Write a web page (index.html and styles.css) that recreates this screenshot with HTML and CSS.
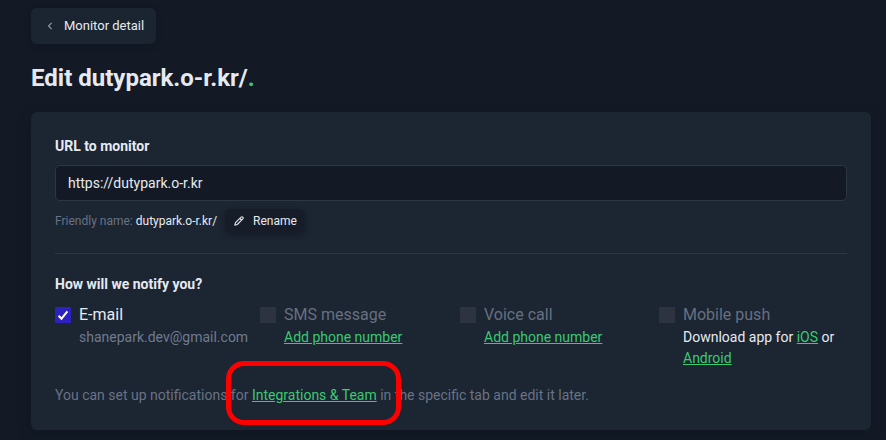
FILE: index.html
```html
<!DOCTYPE html>
<html lang="en">
<head>
<meta charset="utf-8">
<title>Edit monitor</title>
<link rel="stylesheet" href="styles.css">
</head>
<body>
<main class="page">
  <a class="back">
    <svg class="back-icon" viewBox="0 0 6 8"><path d="M4.700 .8L1.500 4l3.200 3.200"/></svg>
    <span>Monitor detail</span>
  </a>
  <h1 class="title">Edit dutypark.o-r.kr/<span class="dot">.</span></h1>
  <section class="card">
    <h2 class="label">URL to monitor</h2>
    <div class="field">https://dutypark.o-r.kr</div>
    <div class="friendly">
      <span class="friendly-key">Friendly name:</span>
      <span class="friendly-value">dutypark.o-r.kr/</span>
      <button class="rename">
        <svg class="pencil" viewBox="0 0 10 10"><path d="M.8 9.200l.7-2.500 5.600-5.500a1.100 1.100 0 0 1 1.700 0 1.100 1.100 0 0 1 0 1.700L3.300 8.500zM6 2.500l1.500 1.500"/></svg>
        <span>Rename</span>
      </button>
    </div>
    <hr class="divider">
    <h2 class="label">How will we notify you?</h2>
    <div class="options">
      <div class="option active">
        <span class="check"><svg viewBox="0 0 16 16"><path d="M3.600 8.700l2.900 3L12.400 4.300"/></svg></span>
        <div><div class="name">E-mail</div><div class="sub muted">shanepark.dev@gmail.com</div></div>
      </div>
      <div class="option">
        <span class="check"></span>
        <div><div class="name">SMS message</div><div class="sub"><a class="link">Add phone number</a></div></div>
      </div>
      <div class="option">
        <span class="check"></span>
        <div><div class="name">Voice call</div><div class="sub"><a class="link">Add phone number</a></div></div>
      </div>
      <div class="option">
        <span class="check"></span>
        <div><div class="name">Mobile push</div><div class="sub">Download app for <a class="link">iOS</a> or <a class="link">Android</a></div></div>
      </div>
    </div>
    <p class="note">You can set up notifications for <span class="target"><a class="link">Integrations &amp; Team</a><span class="ring"></span></span> in the specific tab and edit it later.</p>
  </section>
</main>
</body>
</html>
```

FILE: styles.css
```css
* { box-sizing: border-box; }
body {
  margin: 0;
  height: 440px;
  overflow: hidden;
  background: #131a26;
  color: #e6eaf0;
  font: 14px/21px Roboto, sans-serif;
}
.page { padding: 8px 15px 0 31px; }
.back {
  display: flex;
  align-items: center;
  width: 125px;
  height: 36px;
  padding: 0 0 1px 16px;
  gap: 11px;
  border-radius: 6px;
  background: #1b2431;
  box-shadow: 0 2px 6px rgba(8, 12, 20, .25);
  font-size: 13px;
  white-space: nowrap;
}
.back-icon { width: 6px; height: 8px; margin-top: 1px; fill: none; stroke: #8d97a6; stroke-width: 1.2; }
.title {
  margin: 18px 0 0;
  font-size: 24px;
  line-height: 32px;
  font-weight: 700;
}
.dot { color: #3bc971; }
.card {
  height: 318px;
  margin-top: 18px;
  padding: 24px;
  border-radius: 6px;
  background: #1c2532;
  box-shadow: 0 4px 14px rgba(8, 16, 24, .3);
}
.label { margin: 0; font-size: 14px; line-height: 21px; font-weight: 700; }
.field {
  height: 36px;
  margin-top: 8px;
  padding: 0 12px;
  border: 1px solid #2d3643;
  border-radius: 5px;
  background: #131a26;
  line-height: 34px;
}
.friendly {
  display: flex;
  align-items: center;
  height: 24px;
  margin-top: 8px;
  font-size: 12px;
  white-space: nowrap;
}
.friendly-key { color: #687385; margin-right: 3px; }
.rename {
  display: flex;
  align-items: center;
  gap: 9px;
  width: 80px;
  height: 24px;
  margin-left: 8px;
  padding: 0 0 0 9px;
  border: 0;
  border-radius: 6px;
  background: #161d29;
  box-shadow: 0 2px 6px rgba(8, 12, 20, .35);
  color: #e6eaf0;
  font: 12px/20px Roboto, sans-serif;
}
.pencil { width: 10px; height: 10px; fill: none; stroke: #e6eaf0; stroke-width: 1.1; stroke-linejoin: round; }
.divider { height: 1px; margin: 20px 0; border: 0; background: #2d3643; }
.options {
  display: grid;
  grid-template-columns: 205px 200px 199px 188px;
  height: 65px;
  margin-top: 9px;
}
.option { display: flex; gap: 8px; }
.check { flex: none; width: 16px; height: 16px; margin-top: 3px; background: #2d3340; }
.check svg { display: block; fill: none; stroke: #fff; stroke-width: 2; }
.active .check { background: #2b22c0; border-radius: 1px; }
.name { margin-bottom: 1px; font-size: 16px; line-height: 22px; color: #667080; }
.active .name { color: #e6eaf0; }
.muted { color: #6f7b8f; }
.link { color: #3bc971; text-decoration: underline; }
.note { margin: 16px 0 0; color: #687385; }
.target { position: relative; }
.ring {
  position: absolute;
  left: -26px;
  top: -26px;
  width: 175px;
  height: 64px;
  border: 5px solid #fe0000;
  border-radius: 18px;
}
```
